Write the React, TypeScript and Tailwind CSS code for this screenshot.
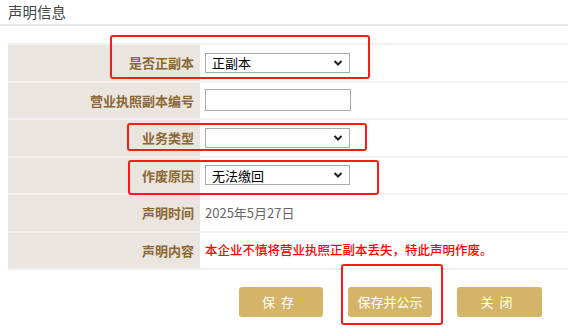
import { ReactNode } from 'react';

const font = { fontFamily: '"Noto Sans CJK SC", "Liberation Sans", sans-serif' };

function Chevron() {
    return (
        <svg width="10" height="7" viewBox="0 0 10 7" className="absolute right-[6px] top-1/2 -translate-y-1/2">
            <path d="M1.5 1.5 L5 5 L8.5 1.5" fill="none" stroke="#222" strokeWidth="2" />
        </svg>
    );
}

function Select({ value }: { value?: string }) {
    return (
        <div className="relative flex h-[20px] w-[145px] items-center border border-[#a9a9a9] bg-white pl-[6px] text-[13px] text-black">
            {value}
            <Chevron />
        </div>
    );
}

function Row({ label, children }: { label: string; children: ReactNode }) {
    return (
        <div className="flex h-[37.5px] border-b-2 border-[#f3f1ef]">
            <div className="flex w-[192px] shrink-0 items-center justify-end bg-[#ebe5df] pr-[6px] text-[13px] font-bold text-[#8a6733]">
                {label}
            </div>
            <div className="flex flex-1 items-center pl-[5px]">{children}</div>
        </div>
    );
}

export default function App() {
    return (
        <div className="relative h-[330px] w-[568px] overflow-hidden bg-white" style={font}>
            {/* Header */}
            <div className="h-[26px] border-b-2 border-[#e6e6e6] pl-[8px] pt-[2px] text-[14.5px] leading-[20px] text-[#444]">
                声明信息
            </div>

            {/* Table */}
            <div className="ml-[8px] mt-[17px] border-t-2 border-[#f3f1ef]">
                <Row label="是否正副本">
                    <Select value="正副本" />
                </Row>
                <Row label="营业执照副本编号">
                    <div className="h-[22px] w-[146px] border border-[#a9a9a9] bg-white" />
                </Row>
                <Row label="业务类型">
                    <Select />
                </Row>
                <Row label="作废原因">
                    <Select value="无法缴回" />
                </Row>
                <Row label="声明时间">
                    <span className="text-[13px] text-[#666]">2025年5月27日</span>
                </Row>
                <Row label="声明内容">
                    <span className="text-[12.5px] font-medium text-[#ff0000]">
                        本企业不慎将营业执照正副本丢失，特此声明作废。
                    </span>
                </Row>
            </div>

            {/* Buttons */}
            <div className="mt-[17px] flex gap-[25px] pl-[239px]">
                <button className="h-[30px] w-[84px] rounded-[3px] bg-[#d4b468] text-[13px] tracking-[6px] text-white">
                    保存
                </button>
                <button className="h-[30px] w-[84px] rounded-[3px] bg-[#d4b468] text-[13px] text-white">
                    保存并公示
                </button>
                <button className="h-[30px] w-[85px] rounded-[3px] bg-[#d4b468] text-[13px] tracking-[6px] text-white">
                    关闭
                </button>
            </div>

            {/* Red annotation boxes */}
            <div className="pointer-events-none absolute left-[110px] top-[35px] h-[44px] w-[260px] rounded-[3px] border-[2.5px] border-[#ff1a1a]" />
            <div className="pointer-events-none absolute left-[127px] top-[123px] h-[28px] w-[240px] rounded-[3px] border-[2.5px] border-[#ff1a1a]" />
            <div className="pointer-events-none absolute left-[128px] top-[160px] h-[35px] w-[251px] rounded-[3px] border-[2.5px] border-[#ff1a1a]" />
            <div className="pointer-events-none absolute left-[341px] top-[264px] h-[61px] w-[102px] rounded-[3px] border-[2.5px] border-[#ff1a1a]" />
        </div>
    );
}
